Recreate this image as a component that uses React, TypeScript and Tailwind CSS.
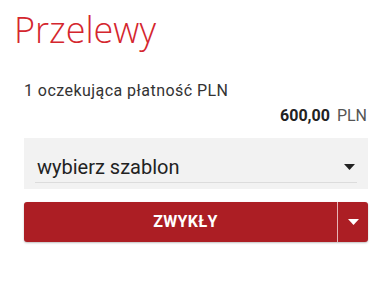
import React from 'react';

const Caret: React.FC<{ className?: string }> = ({ className }) => (
  <svg width="11" height="6" viewBox="0 0 11 6" className={className}>
    <path d="M0 0h11L5.5 6z" fill="currentColor" />
  </svg>
);

const App: React.FC = () => {
  return (
    <div className="w-[392px] h-[307px] bg-white font-['Roboto',sans-serif] text-[#333]">
      {/* Header */}
      <h1 className="pl-[14px] pt-[8px] text-[36px] leading-[44px] font-light text-[#d4262e] font-['Open_Sans',sans-serif]">
        Przelewy
      </h1>

      <div className="px-6 pt-[29px]">
        {/* Pending payments */}
        <p className="text-[16px] leading-[20px] tracking-[0.45px] text-[#333]">1 oczekująca płatność PLN</p>
        <p className="mt-[5px] text-right text-[16px] leading-[20px] pr-[1px]">
          <span className="font-bold text-[#222]">600,00</span>
          <span className="ml-[7px] text-[#555]">PLN</span>
        </p>

        {/* Template select */}
        <div className="mt-[12px] h-[51px] bg-[#f2f2f2] px-[11px] pt-[13px]">
          <div className="flex items-center justify-between h-[32px] border-b border-[#dcdcdc] pr-[2px]">
            <span className="text-[20px] leading-[26px] text-[#222] pl-[2px]">wybierz szablon</span>
            <Caret className="text-[#222]" />
          </div>
        </div>

        {/* Transfer button */}
        <div className="mt-[13px] flex h-[40px] rounded-[3px] bg-[#ac1e24] text-white shadow-[0_1px_2px_rgba(0,0,0,0.25)]">
          <button className="flex-1 text-[16px] font-bold tracking-[0.3px] pl-[10px]">ZWYKŁY</button>
          <div className="w-px bg-[#e8b4b6]" />
          <button className="w-[30px] flex items-center justify-center">
            <Caret />
          </button>
        </div>
      </div>
    </div>
  );
};

export default App;
